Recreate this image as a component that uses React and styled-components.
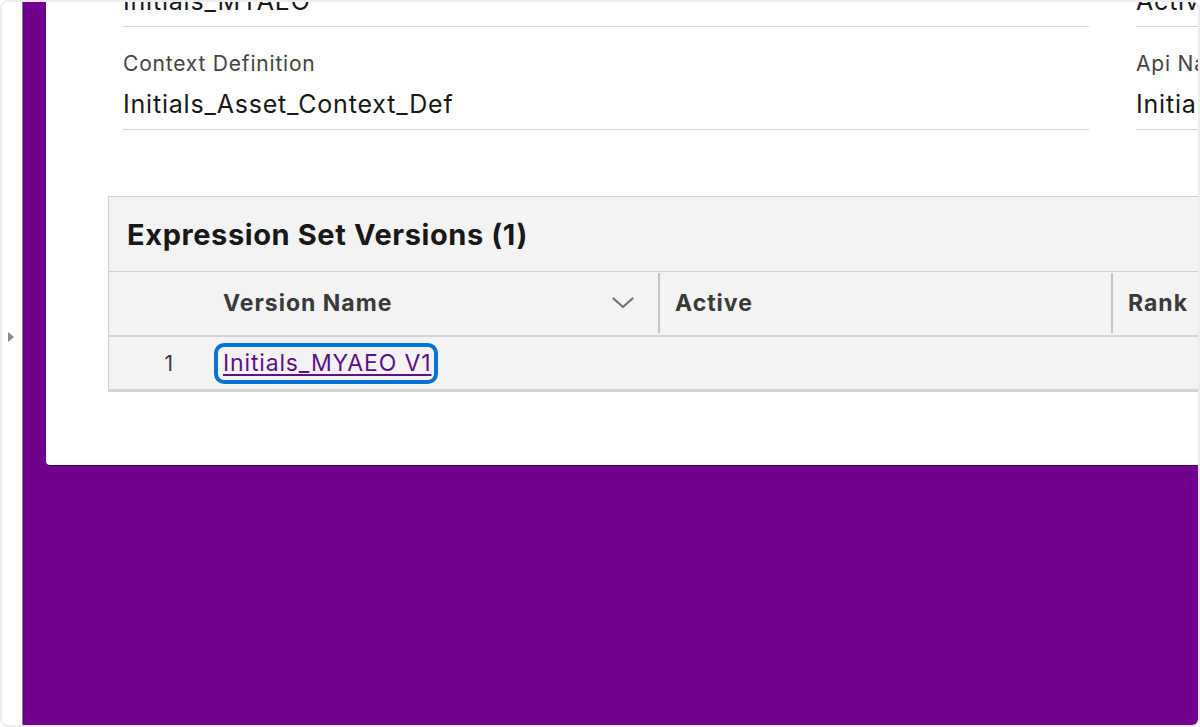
import React from "react";
import styled, { createGlobalStyle } from "styled-components";

const Global = createGlobalStyle`
  html, body { margin: 0; padding: 0; background: #ffffff; }
  body { font-family: Inter, "Noto Sans", sans-serif; }
  * { box-sizing: border-box; }
`;

const Frame = styled.div`
  width: 1200px;
  height: 727px;
  border: 2px solid #ececf1;
  border-radius: 8px;
  overflow: hidden;
  display: flex;
  background: #fff;
`;

const SideStrip = styled.div`
  width: 21px;
  flex: none;
  background: #fff;
  border-right: 1px solid #7d7d7d;
  display: flex;
  align-items: center;
  justify-content: center;
  padding-bottom: 54px;
`;

const Triangle = styled.div`
  width: 0;
  height: 0;
  border-top: 5px solid transparent;
  border-bottom: 5px solid transparent;
  border-left: 6px solid #8a8a8a;
  margin-left: -2px;
`;

const Stage = styled.div`
  flex: 1;
  background: #710290;
  padding-left: 23px;
  min-width: 0;
  display: flex;
  align-items: flex-start;
`;

const Card = styled.div`
  flex: none;
  width: 1200px;
  margin-top: -78px;
  background: #fff;
  border-bottom-left-radius: 4px;
  box-shadow: 0 1px 1px rgba(0, 0, 0, 0.35);
  padding: 0 0 73px 62px;
`;

const FieldGrid = styled.div`
  display: grid;
  grid-template-columns: 966px 1fr;
  column-gap: 47px;
  padding-left: 15px;
`;

const Field = styled.div`
  padding: 25px 0 10px;
  border-bottom: 1px solid #d6d6d6;
`;

const Label = styled.div`
  font-size: 21px;
  letter-spacing: 0.8px;
  line-height: 24px;
  color: #444444;
  white-space: nowrap;
  overflow: hidden;
`;

const Value = styled.div`
  margin-top: 13px;
  font-size: 25px;
  letter-spacing: 0.8px;
  line-height: 30px;
  color: #181818;
  white-space: nowrap;
  overflow: hidden;
`;

const Related = styled.div`
  margin-top: 66px;
  background: #f3f3f3;
  border-top: 1px solid #cfcfcf;
  border-left: 1px solid #cfcfcf;
`;

const RelatedHeader = styled.div`
  height: 75px;
  display: flex;
  align-items: center;
  padding-left: 18px;
  border-bottom: 1px solid #cfcfcf;
  font-size: 29px;
  letter-spacing: 0.6px;
  font-weight: 700;
  color: #181818;
`;

const Row = styled.div`
  display: grid;
  grid-template-columns: 106px 445px 453px 1fr;
  height: ${(p) => p.$h}px;
  border-bottom: ${(p) => p.$rule}px solid #d4d4d4;
`;

const HeadCell = styled.div`
  display: flex;
  align-items: center;
  justify-content: space-between;
  padding-left: ${(p) => p.$pad}px;
  padding-right: 24px;
  font-size: 23px;
  letter-spacing: 1px;
  font-weight: 700;
  color: #3a3a3a;
  border-right: ${(p) => (p.$divider ? "2px solid #c4c4c4" : "none")};
  margin: 1px 0 2px;
  white-space: nowrap;
`;

const NumCell = styled.div`
  display: flex;
  align-items: center;
  justify-content: flex-end;
  padding-right: 42px;
  font-size: 21px;
  color: #3a3a3a;
`;

const DataCell = styled.div`
  display: flex;
  align-items: center;
`;

const FocusRing = styled.div`
  margin-left: -1px;
  border: 4px solid #0473d5;
  border-radius: 10px;
  padding: 0 3px 0 5px;
  height: 41px;
  display: flex;
  align-items: center;
`;

const Link = styled.a`
  font-size: 23px;
  letter-spacing: 0.85px;
  line-height: 28px;
  color: #5f0f8a;
  text-decoration: underline;
  text-underline-offset: 3px;
  text-decoration-thickness: 2px;
  white-space: nowrap;
`;

const Chevron = () => (
  <svg width="22" height="12" viewBox="0 0 22 12" fill="none">
    <path d="M1.5 1.5 L11 10 L20.5 1.5" stroke="#707070" strokeWidth="2.2" strokeLinecap="round" strokeLinejoin="round" />
  </svg>
);

export default function App() {
  return (
    <>
      <Global />
      <Frame>
        <SideStrip>
          <Triangle />
        </SideStrip>
        <Stage>
          <Card>
            <FieldGrid>
              <Field>
                <Label>Expression Set Name</Label>
                <Value>Initials_MYAEO</Value>
              </Field>
              <Field>
                <Label>Status</Label>
                <Value>Active</Value>
              </Field>
              <Field>
                <Label>Context Definition</Label>
                <Value>Initials_Asset_Context_Def</Value>
              </Field>
              <Field>
                <Label>Api Name</Label>
                <Value>Initials_MYAEO</Value>
              </Field>
            </FieldGrid>
            <Related>
              <RelatedHeader>Expression Set Versions (1)</RelatedHeader>
              <Row $h={65} $rule={2}>
                <HeadCell $pad={0} />
                <HeadCell $pad={8} $divider>
                  Version Name
                  <Chevron />
                </HeadCell>
                <HeadCell $pad={15} $divider>Active</HeadCell>
                <HeadCell $pad={15}>Rank</HeadCell>
              </Row>
              <Row $h={55} $rule={3}>
                <NumCell>1</NumCell>
                <DataCell>
                  <FocusRing>
                    <Link href="#">Initials_MYAEO V1</Link>
                  </FocusRing>
                </DataCell>
                <DataCell />
                <DataCell />
              </Row>
            </Related>
          </Card>
        </Stage>
      </Frame>
    </>
  );
}
